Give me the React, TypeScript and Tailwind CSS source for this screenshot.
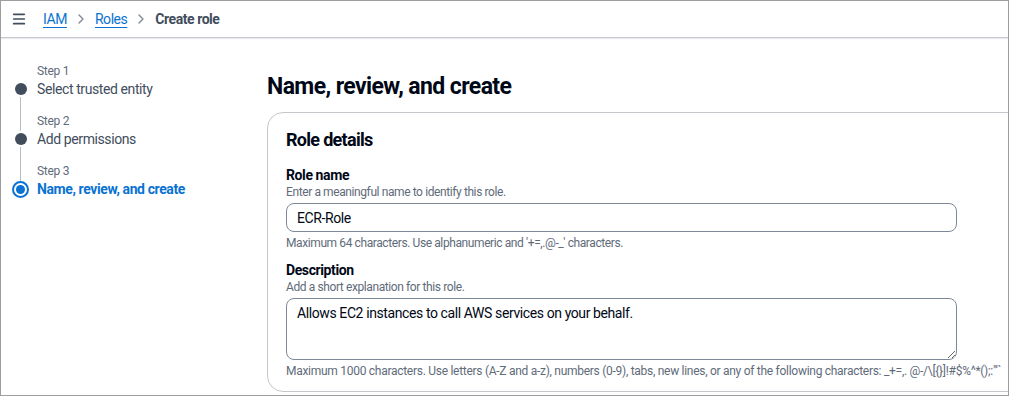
import { Menu, ChevronRight } from 'lucide-react';

const font = { fontFamily: 'Roboto, "Liberation Sans", sans-serif' };

function Breadcrumbs() {
  return (
    <div className="h-[37px] flex items-center border-b border-[#c6c6cd] shadow-[0_1px_1px_#e9ebed] tracking-[-0.45px]">
      <Menu className="w-[16px] h-[16px] ml-[10px] mr-[16px] text-[#414d5c]" strokeWidth={2.5} />
      <a className="text-[14px] text-[#0972d3] underline underline-offset-[3px]">IAM</a>
      <ChevronRight className="w-[16px] h-[16px] mx-[6px] text-[#7d8998]" strokeWidth={2} />
      <a className="text-[14px] text-[#0972d3] underline underline-offset-[3px]">Roles</a>
      <ChevronRight className="w-[16px] h-[16px] mx-[6px] text-[#7d8998]" strokeWidth={2} />
      <span className="text-[14px] font-bold text-[#414d5c]">Create role</span>
    </div>
  );
}

const steps = [
  { n: 1, label: 'Select trusted entity' },
  { n: 2, label: 'Add permissions' },
  { n: 3, label: 'Name, review, and create', active: true },
];

function StepNav() {
  return (
    <div className="w-[266px] shrink-0 pt-[25px] pl-[11px]">
      {steps.map((s, i) => (
        <div key={s.n} className="flex">
          <div className="w-[17px] flex flex-col items-center">
            <div className={`w-px h-[18px] ${i === 0 ? '' : 'bg-[#b6bec9]'}`} />
            {s.active ? (
              <div className="w-[17px] h-[17px] rounded-full border-[2px] border-[#0972d3] flex items-center justify-center">
                <div className="w-[9px] h-[9px] rounded-full bg-[#0972d3]" />
              </div>
            ) : (
              <div className="w-[12px] h-[12px] rounded-full bg-[#414d5c] my-[2px]" />
            )}
            {i < steps.length - 1 && <div className="w-px flex-1 bg-[#b6bec9]" />}
          </div>
          <div className="pl-[8px] pb-[14px]">
            <div className="text-[12px] leading-[16px] text-[#5f6b7a] tracking-[-0.3px]">Step {s.n}</div>
            <div
              className={`text-[14px] leading-[20px] tracking-[-0.4px] ${
                s.active ? 'font-bold text-[#0972d3]' : 'text-[#414d5c]'
              }`}
            >
              {s.label}
            </div>
          </div>
        </div>
      ))}
    </div>
  );
}

function RoleDetails() {
  return (
    <div className="w-[760px] rounded-[16px] border border-[#c6c6cd] px-[18px] pt-[16px] pb-[12px]">
      <h2 className="text-[18px] leading-[22px] font-bold text-[#000716] tracking-[-0.7px]">Role details</h2>

      <div className="mt-[16px]">
        <div className="text-[14px] leading-[17px] font-bold text-[#000716] tracking-[-0.4px]">Role name</div>
        <div className="text-[12px] leading-[16px] text-[#5f6b7a] tracking-[-0.4px]">
          Enter a meaningful name to identify this role.
        </div>
        <input
          readOnly
          value="ECR-Role"
          className="mt-[3px] w-[671px] h-[29px] rounded-[8px] border border-[#7d8998] px-[10px] text-[14px] text-[#000716] tracking-[-0.4px] outline-none"
        />
        <div className="mt-[3px] text-[12px] leading-[16px] text-[#5f6b7a] tracking-[-0.4px]">
          Maximum 64 characters. Use alphanumeric and '+=,.@-_' characters.
        </div>
      </div>

      <div className="mt-[11px]">
        <div className="text-[14px] leading-[17px] font-bold text-[#000716] tracking-[-0.4px]">Description</div>
        <div className="text-[12px] leading-[16px] text-[#5f6b7a] tracking-[-0.4px]">
          Add a short explanation for this role.
        </div>
        <textarea
          readOnly
          value="Allows EC2 instances to call AWS services on your behalf."
          className="mt-[3px] block w-[671px] h-[62px] rounded-[8px] border border-[#7d8998] px-[10px] py-[4px] text-[14px] leading-[20px] text-[#000716] tracking-[-0.4px] outline-none resize"
        />
        <div className="mt-[3px] text-[12px] leading-[16px] text-[#5f6b7a] whitespace-nowrap tracking-[-0.28px]">
          Maximum 1000 characters. Use letters (A-Z and a-z), numbers (0-9), tabs, new lines, or any of the following
          characters: _+=,. @-/\[{'{'}
          {'}'}]!#$%^*();:"'`
        </div>
      </div>
    </div>
  );
}

export default function App() {
  return (
    <div
      className="w-[1009px] h-[396px] overflow-hidden bg-white border border-[#9e9e9e] flex flex-col"
      style={font}
    >
      <Breadcrumbs />
      <div className="flex flex-1">
        <StepNav />
        <main className="pt-[35px]">
          <h1 className="text-[23px] leading-[28px] font-bold text-[#000716] tracking-[-0.6px] mb-[11px]">
            Name, review, and create
          </h1>
          <RoleDetails />
        </main>
      </div>
    </div>
  );
}
